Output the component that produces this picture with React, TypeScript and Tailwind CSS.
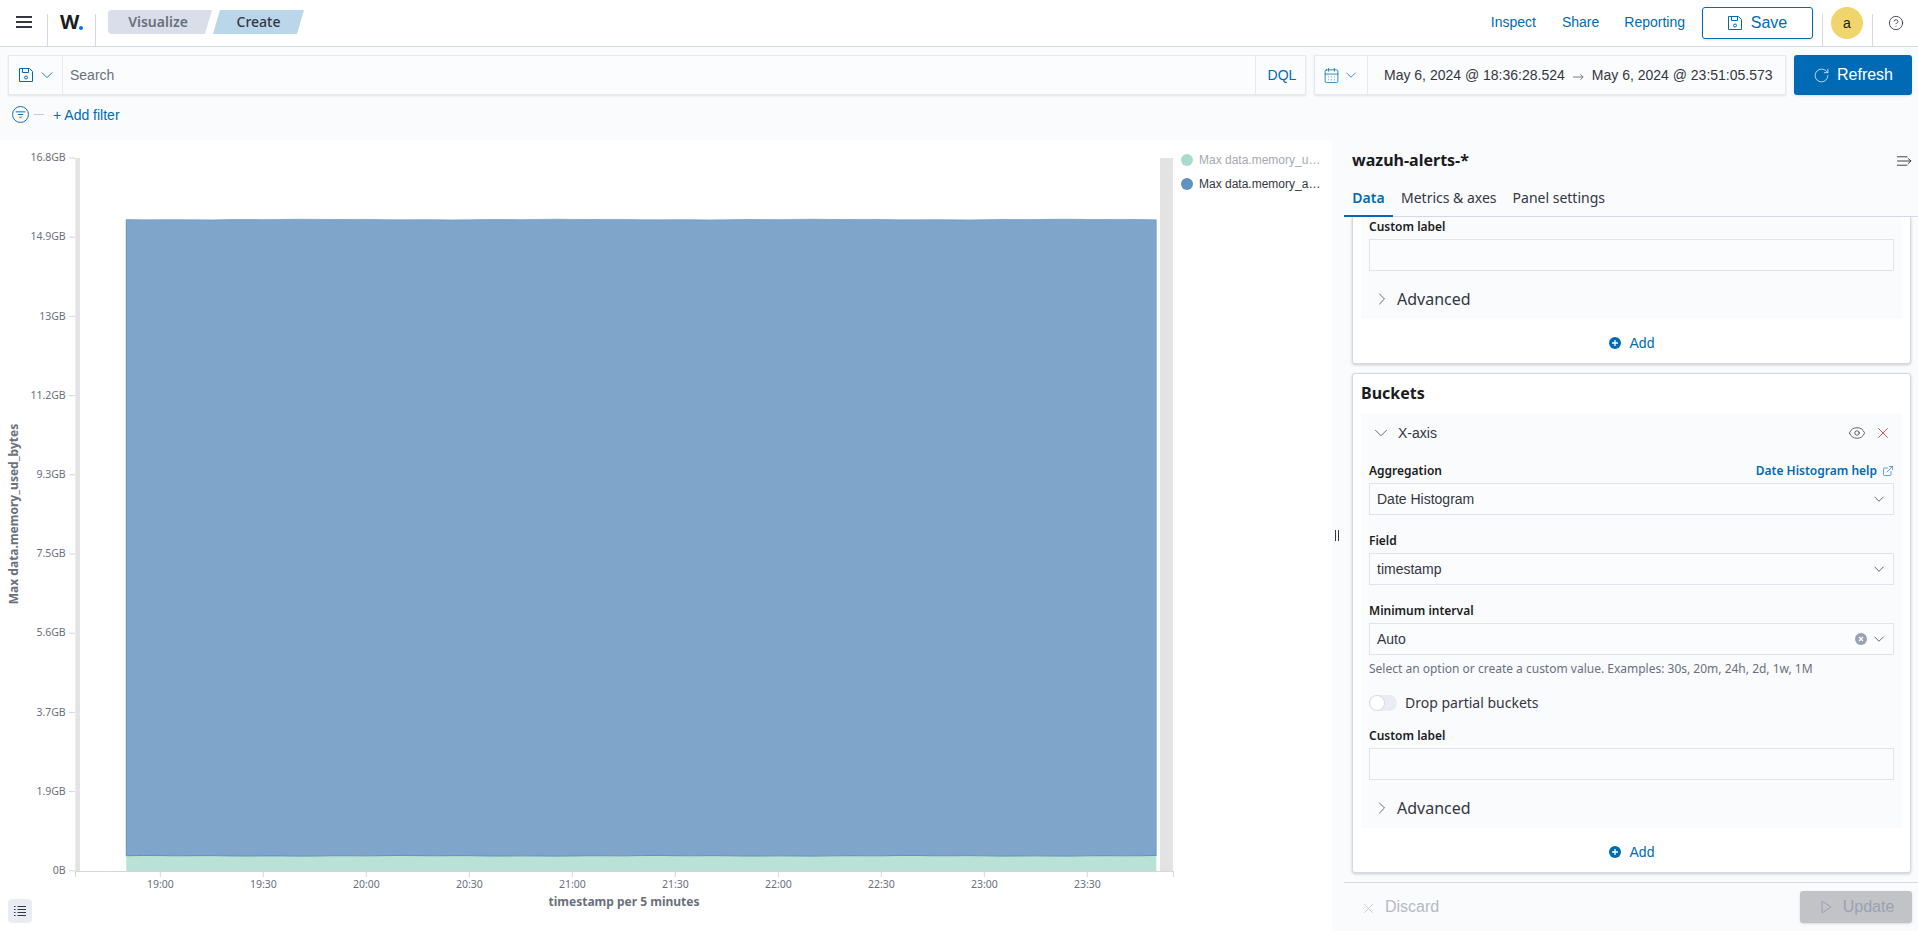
import { ChevronDown, ChevronRight, CircleHelp, ExternalLink, Eye, RotateCw, X, CalendarDays } from 'lucide-react';

const yTicks = ['16.8GB', '14.9GB', '13GB', '11.2GB', '9.3GB', '7.5GB', '5.6GB', '3.7GB', '1.9GB', '0B'];
const xTicks = ['19:00', '19:30', '20:00', '20:30', '21:00', '21:30', '22:00', '22:30', '23:00', '23:30'];

const mono = "font-['Liberation_Sans',Arial,sans-serif]";
const noto = "font-['Noto_Sans',sans-serif]";

// small wobble so the areas don't look ruled
const steps = Array.from({ length: 61 }, (_, i) => 126.3 + (i * (1156.3 - 126.3)) / 60);
const wobble = (i: number) => Math.sin(i * 1.7) * 0.15 + Math.sin(i * 0.43) * 0.2;
const topLine = steps.map((x, i) => `${x},${219.6 + wobble(i)}`).join(' L');
const midLine = steps.map((x, i) => `${x},${855.8 + wobble(i + 9)}`).join(' L');
const midBack = [...steps].reverse().map((x, i) => `${x},${855.8 + wobble(60 - i + 9)}`).join(' L');

function SaveIcon({ className }: { className?: string }) {
  return (
    <svg viewBox="1 1 14 14" className={className} fill="none" stroke="currentColor" strokeWidth="1">
      <path d="M1.5 1.5h10l3 3v10h-13z" />
      <path d="M4.5 1.5v4h6v-4" />
      <circle cx="8" cy="10.5" r="1.5" />
    </svg>
  );
}

function Chevron({ className }: { className?: string }) {
  return (
    <svg viewBox="0 0 16 16" className={className} fill="none" stroke="currentColor" strokeWidth="1">
      <path d="M2 5l6 6 6-6" />
    </svg>
  );
}

function AddRow() {
  return (
    <div className="h-[44px] pt-[3px] flex items-center justify-center gap-[9px] text-[#006bb4]">
      <svg viewBox="0 0 12 12" className="w-[12px] h-[12px]">
        <circle cx="6" cy="6" r="6" fill="#006bb4" />
        <path d="M3 6h6M6 3v6" stroke="#fff" strokeWidth="1.3" />
      </svg>
      <span className={`${mono} text-sm`}>Add</span>
    </div>
  );
}

function FieldLabel({ children }: { children: string }) {
  return <div className={`${noto} h-5 mb-0.5 text-xs font-semibold leading-5 text-[#1a1c21]`}>{children}</div>;
}

function EmptyInput() {
  return <div className="h-8 border border-[#dfe4ee] bg-[#fbfcfd]" />;
}

function SelectBox({ value, clear }: { value: string; clear?: boolean }) {
  return (
    <div className="h-8 border border-[#dfe4ee] bg-[#fbfcfd] flex items-center pl-[7px] pr-[8px]">
      <span className={`${mono} text-sm text-[#343741] flex-1`}>{value}</span>
      {clear && (
        <svg viewBox="0 0 12 12" className="w-3 h-3 mr-[6px]">
          <circle cx="6" cy="6" r="6" fill="#98a2b3" />
          <path d="M4 4l4 4M8 4l-4 4" stroke="#fff" strokeWidth="1.3" />
        </svg>
      )}
      <Chevron className="w-[12px] h-[12px] text-[#343741]" />
    </div>
  );
}

function Advanced() {
  return (
    <div className="h-[48px] pt-2 flex items-center text-[#343741]">
      <ChevronRight className="w-[20px] h-[20px] ml-[3px] mr-[5px]" strokeWidth={0.9} />
      <span className={`${noto} text-base`}>Advanced</span>
    </div>
  );
}

function Chart() {
  return (
    <svg viewBox="0 140 1178 791" className="w-[1178px] h-full shrink-0">
      <rect x="75.3" y="158" width="4.7" height="713" fill="#e3e3e3" />
      <rect x="1160" y="158" width="13" height="713" fill="#e3e3e3" />
      <path d={`M126.3,871 L${midLine} L1156.3,871 Z`} fill="#b9e1d5" />
      <path d={`M${topLine} L${midBack} Z`} fill="#7fa5cb" />
      <path d={`M126.3,856 L126.3,219.6`} fill="none" stroke="#6092c0" strokeWidth="1" />
      <path d={`M${topLine}`} fill="none" stroke="#6092c0" strokeOpacity="0.6" strokeWidth="1" />
      <path d={`M${midLine}`} fill="none" stroke="#6092c0" strokeWidth="1" />
      <path d="M1156.3,219.6 V856" fill="none" stroke="#6092c0" strokeOpacity="0.5" strokeWidth="1" />
      <path d="M75,871.5 H1173.5" stroke="#d6d6d6" />
      <path d="M75.5,871 V877 M1173.5,871 V877" stroke="#d6d6d6" />
      {yTicks.map((t, i) => {
        const y = 158 + i * 79.2;
        return (
          <g key={t}>
            <path d={`M69,${y} H75`} stroke="#d6d6d6" />
            <text x="65.7" y={y + 3.2} textAnchor="end" fontSize="10.5" fill="#69707d" fontFamily="'Noto Sans', sans-serif">{t}</text>
          </g>
        );
      })}
      {xTicks.map((t, i) => {
        const x = 160.3 + i * 103;
        return (
          <g key={t}>
            <path d={`M${x},871 V877`} stroke="#d6d6d6" />
            <text x={x} y="888" textAnchor="middle" fontSize="10.5" fill="#69707d" fontFamily="'Noto Sans', sans-serif">{t}</text>
          </g>
        );
      })}
      <text x="624" y="905.5" textAnchor="middle" fontSize="12" fontWeight="700" fill="#69707d" fontFamily="'Noto Sans', sans-serif">timestamp per 5 minutes</text>
      <text transform="translate(18,514) rotate(-90)" textAnchor="middle" fontSize="12" fontWeight="700" fill="#69707d" fontFamily="'Noto Sans', sans-serif">Max data.memory_used_bytes</text>
    </svg>
  );
}

export default function App() {
  return (
    <div className="h-screen w-full flex flex-col overflow-hidden bg-[#fafbfd]">
      {/* top bar */}
      <div className="h-[47px] shrink-0 bg-white border-b border-[#d3dae6] flex items-end">
        <div className="w-[47px] h-full flex items-center justify-center pb-[2px]">
          <div className="w-4 space-y-[3px] pl-0">
            <div className="h-[2px] bg-[#343741]" />
            <div className="h-[2px] bg-[#343741]" />
            <div className="h-[2px] bg-[#343741]" />
          </div>
        </div>
        <div className="w-px h-8 bg-[#d3dae6]" />
        <div className="w-[47px] h-full flex items-center pl-3 pb-[2px]">
          <span className={`${noto} text-xl font-bold leading-none text-[#1a1c21]`}>W</span>
          <span className="w-1 h-1 rounded-full bg-[#0a6cff] mt-[12px]" />
        </div>
        <div className="w-px h-8 bg-[#d3dae6]" />
        <div className="h-full flex items-center pl-3 pb-[2px]">
          <div className={`${noto} w-[104px] h-6 bg-[#d9deea] rounded-l-[4px] text-sm font-semibold text-[#69707d] flex items-center justify-center pr-1 [clip-path:polygon(0_0,100%_0,calc(100%-7px)_100%,0_100%)]`}>
            Visualize
          </div>
          <div className={`${noto} w-[91px] h-6 ml-[1px] bg-[#b9d6ea] text-sm font-medium text-[#343741] flex items-center justify-center [clip-path:polygon(7px_0,100%_0,calc(100%-7px)_100%,0_100%)]`}>
            Create
          </div>
        </div>
        <div className="flex-1" />
        <div className={`${mono} h-full flex items-center text-sm text-[#006bb4] pb-[2px]`}>
          <span>Inspect</span>
          <span className="ml-[26px]">Share</span>
          <span className="ml-[25px]">Reporting</span>
        </div>
        <div className="h-full flex items-center ml-[17px] pb-[1px]">
          <div className={`${mono} w-[111px] h-8 border border-[#006bb4] rounded-[3px] text-base text-[#006bb4] flex items-center justify-center gap-[9px] shadow-sm`}>
            <SaveIcon className="w-[14px] h-[14px]" />
            <span>Save</span>
          </div>
        </div>
        <div className="w-px h-8 bg-[#d3dae6] ml-[9px]" />
        <div className="h-full flex items-center ml-2 pb-[1px]">
          <div className={`${mono} w-8 h-8 rounded-full bg-[#efd56b] flex items-center justify-center text-sm text-[#1a1c21]`}>a</div>
        </div>
        <div className="w-px h-8 bg-[#d3dae6] ml-[9px]" />
        <div className="w-[45px] h-full flex items-center justify-center pb-[1px]">
          <CircleHelp className="w-4 h-4 text-[#343741]" strokeWidth={1.3} />
        </div>
      </div>

      {/* search row */}
      <div className="shrink-0 pl-2 pr-[6px] pt-2 flex gap-2">
        <div className="flex-1 h-10 flex border border-[#e6e9f0] shadow-[0_1px_2px_rgba(0,0,0,0.1)] bg-[#fbfcfd]">
          <div className="w-[54px] flex items-center pl-[10px] gap-[7px] text-[#006bb4] border-r border-[#e6e9f0]">
            <SaveIcon className="w-[14px] h-[14px]" />
            <Chevron className="w-[14px] h-[14px]" />
          </div>
          <div className={`${mono} flex-1 flex items-center pl-[7px] text-sm text-[#69707d]`}>Search</div>
          <div className={`${mono} w-[50px] flex items-center justify-center pl-[3px] text-sm text-[#006bb4] border-l border-[#e6e9f0]`}>DQL</div>
        </div>
        <div className="w-[472px] h-10 flex border border-[#e6e9f0] shadow-[0_1px_2px_rgba(0,0,0,0.1)] bg-[#fbfcfd]">
          <div className="w-[53px] flex items-center pl-[8px] gap-[5px] text-[#006bb4] border-r border-[#e6e9f0]">
            <CalendarDays className="w-[17px] h-[17px]" strokeWidth={1.1} />
            <Chevron className="w-[12px] h-[12px]" />
          </div>
          <div className={`${mono} flex-1 flex items-center pl-4 text-sm text-[#343741]`}>
            <span>May 6, 2024 @ 18:36:28.524</span>
            <svg viewBox="0 0 12 8" className="w-[11px] h-2 mx-2 mt-1 text-[#69707d]" fill="none" stroke="currentColor" strokeWidth="1">
              <path d="M0 4h11M8 1l3 3-3 3" />
            </svg>
            <span>May 6, 2024 @ 23:51:05.573</span>
          </div>
        </div>
        <div className={`${mono} w-[118px] h-10 rounded-[3px] bg-[#006bb4] text-white text-base flex items-center justify-center gap-[7px] shadow-sm`}>
          <RotateCw className="w-[17px] h-[17px]" strokeWidth={1} />
          <span>Refresh</span>
        </div>
      </div>

      {/* filter row */}
      <div className="shrink-0 h-[45px] pl-3 pb-[6px] flex items-center">
        <svg viewBox="0 0 16 16" className="w-[17px] h-[17px] text-[#006bb4]" fill="none" stroke="currentColor" strokeWidth="0.9">
          <circle cx="8" cy="8" r="7.5" />
          <path d="M3.5 5.5h9M5.5 8h5M7 10.5h2" />
        </svg>
        <div className="w-[10px] h-px bg-[#c2c9d6] ml-[5px]" />
        <span className={`${mono} ml-[9px] text-sm text-[#006bb4]`}>+ Add filter</span>
      </div>

      {/* workspace */}
      <div className="flex-1 min-h-0 flex">
        <div className="relative w-[1332px] shrink-0 bg-white flex">
          <Chart />
          <div className={`${mono} pl-[3px] pt-[8px] text-xs`}>
            <div className="h-[24px] flex items-center text-[#a5a9b0]">
              <span className="w-3 h-3 rounded-full bg-[#aadccd] mr-[6px] shrink-0" />
              <span className="w-[123px] truncate">Max data.memory_used_bytes</span>
            </div>
            <div className="h-[24px] flex items-center text-[#343741]">
              <span className="w-3 h-3 rounded-full bg-[#6092c0] mr-[6px] shrink-0" />
              <span className="w-[123px] truncate">Max data.memory_available_bytes</span>
            </div>
          </div>
          <div className="absolute left-2 bottom-2 w-6 h-6 rounded-[4px] bg-[#e9edf3] flex items-center justify-center">
            <svg viewBox="0 0 12 12" className="w-3 h-3 text-[#343741]" fill="none" stroke="currentColor" strokeWidth="1">
              <path d="M3.5 1.5H12M3.5 4.5H12M3.5 7.5H12M3.5 10.5H12" />
              <path d="M0 1.5h1.5M0 4.5h1.5M0 7.5h1.5M0 10.5h1.5" />
            </svg>
          </div>
        </div>

        <div className="relative flex-1 min-w-0 flex flex-col">
          <div className="h-[42px] shrink-0 pl-5 pr-[6px] flex items-center justify-between">
            <span className={`${noto} pb-[2px] text-base font-bold text-[#1a1c21]`}>wazuh-alerts-*</span>
            <svg viewBox="0 0 16 12" className="w-[15px] h-3 text-[#343741]" fill="none" stroke="currentColor" strokeWidth="1">
              <path d="M0 1.5h11M0 10.5h11M0 6h15M11.5 3l3.5 3-3.5 3" />
            </svg>
          </div>
          <div className={`${noto} ml-3 h-[35px] shrink-0 flex items-start text-sm border-b border-[#d3dae6] text-[#343741]`}>
            <span className="w-[49px] h-[35px] border-b-2 border-[#006bb4] text-center pt-[6px] font-semibold text-[#006bb4]">Data</span>
            <span className="ml-2 pt-[6px]">Metrics &amp; axes</span>
            <span className="ml-4 pt-[6px]">Panel settings</span>
          </div>

          <div className="flex-1 min-h-0 overflow-hidden pl-5 pr-[7px]">
            <div className="border border-t-0 border-[#d3dae6] bg-white shadow-[0_1px_3px_rgba(0,0,0,0.2)] rounded-b-[3px] px-2">
              <div className="bg-[#fafbfd] px-2">
                <FieldLabel>Custom label</FieldLabel>
                <EmptyInput />
                <Advanced />
              </div>
              <AddRow />
            </div>

            <div className="mt-[9px] border border-[#d3dae6] bg-white shadow-[0_1px_3px_rgba(0,0,0,0.2)] rounded-[3px] px-2">
              <div className={`${noto} h-[39px] pb-[2px] flex items-center text-base font-bold text-[#1a1c21]`}>Buckets</div>
              <div className="bg-[#fafbfd] px-2">
                <div className="h-10 flex items-center text-[#343741]">
                  <ChevronDown className="w-[22px] h-[22px] ml-[1px] mr-[6px]" strokeWidth={0.8} />
                  <span className={`${mono} text-sm flex-1`}>X-axis</span>
                  <Eye className="w-[18px] h-[18px] mr-[8px]" strokeWidth={1} />
                  <X className="w-[18px] h-[18px] mr-[2px] text-[#bd271e]" strokeWidth={1} />
                </div>
                <div className="mt-2">
                  <div className="flex justify-between">
                    <FieldLabel>Aggregation</FieldLabel>
                    <div className={`${noto} h-5 flex items-center gap-[5px] text-xs font-semibold text-[#006bb4]`}>
                      <span>Date Histogram help</span>
                      <ExternalLink className="w-[12px] h-[12px]" strokeWidth={1.2} />
                    </div>
                  </div>
                  <SelectBox value="Date Histogram" />
                </div>
                <div className="mt-4">
                  <FieldLabel>Field</FieldLabel>
                  <SelectBox value="timestamp" />
                </div>
                <div className="mt-4">
                  <FieldLabel>Minimum interval</FieldLabel>
                  <SelectBox value="Auto" clear />
                  <div className={`${noto} h-[17px] mt-[5px] text-xs leading-[17px] text-[#69707d]`}>
                    Select an option or create a custom value. Examples: 30s, 20m, 24h, 2d, 1w, 1M
                  </div>
                </div>
                <div className="mt-[18px] h-4 flex items-center">
                  <div className="w-7 h-4 rounded-full bg-[#e9edf3] relative">
                    <div className="absolute left-0 top-0 w-4 h-4 rounded-full bg-white border border-[#d3dae6]" />
                  </div>
                  <span className={`${noto} ml-2 text-sm text-[#343741]`}>Drop partial buckets</span>
                </div>
                <div className="mt-[15px]">
                  <FieldLabel>Custom label</FieldLabel>
                  <EmptyInput />
                </div>
                <Advanced />
              </div>
              <AddRow />
            </div>
          </div>

          <div className="h-[49px] shrink-0 ml-3 border-t border-[#d3dae6] flex items-center justify-between pr-[6px]">
            <div className={`${mono} ml-[16px] flex items-center gap-[8px] text-base text-[#b4bac5]`}>
              <X className="w-[17px] h-[17px] mt-[2px]" strokeWidth={0.9} />
              <span>Discard</span>
            </div>
            <div className={`${mono} w-[112px] h-8 pl-[3px] rounded-[3px] bg-[#c2c3c6] text-base text-[#98a2b3] flex items-center justify-center gap-[11px] shadow-sm`}>
              <svg viewBox="0 0 11 14" className="w-[11px] h-[14px]" fill="none" stroke="currentColor" strokeWidth="1">
                <path d="M1 1l9 6-9 6z" />
              </svg>
              <span>Update</span>
            </div>
          </div>
          <div className="absolute left-[3px] top-[390px] w-[4px] h-[11px] border-x border-[#343741]" />
        </div>
      </div>
    </div>
  );
}
